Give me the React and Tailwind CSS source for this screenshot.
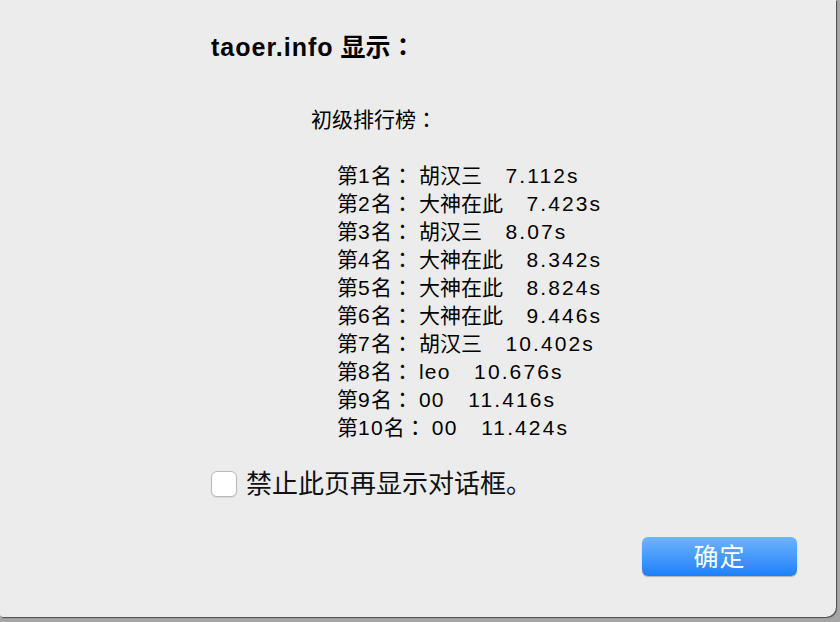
import React from "react";

const rows = [
  ["1", "胡汉三", "7.112s"],
  ["2", "大神在此", "7.423s"],
  ["3", "胡汉三", "8.07s"],
  ["4", "大神在此", "8.342s"],
  ["5", "大神在此", "8.824s"],
  ["6", "大神在此", "9.446s"],
  ["7", "胡汉三", "10.402s"],
  ["8", "leo", "10.676s"],
  ["9", "00", "11.416s"],
  ["10", "00", "11.424s"],
];

function Colon() {
  return (
    <span className="font-['Liberation_Sans','Noto_Sans_CJK_TC',sans-serif]">：</span>
  );
}

export default function App() {
  return (
    <div className="w-[840px] h-[622px] bg-[#a6a6a6] overflow-hidden font-['Liberation_Sans','Noto_Sans_CJK_SC',sans-serif] text-black">
      <div className="w-[836px] h-[617px] bg-[#ececec] rounded-br-[10px] rounded-bl-[3px] shadow-[1px_1px_1px_rgba(0,0,0,0.55)] flex flex-col">
        <div className="pl-[211px] pt-[32px] h-[62px] text-[25px] leading-[30px] font-bold whitespace-pre">
          <span className="tracking-[1px]">taoer.info</span> 显示<Colon />
        </div>
        <div className="pl-[311px] mt-[44px] text-[21px] leading-[28px] whitespace-pre">
          <div className="h-[28px]">
            初级排行榜<Colon />
          </div>
          <div className="h-[28px]" />
          {rows.map(([n, name, t]) => (
            <div key={n} className="pl-[26px] h-[28px]">
              第<span className="tracking-[1.2px]">{n}</span>名<Colon />
              <span className="ml-[6px]">
                {/^[a-z0-9]+$/.test(name) ? (
                  <span className="tracking-[1.2px]">{name}</span>
                ) : (
                  name
                )}
              </span>
              <span className="tracking-[2px]">{"  "}</span>
              <span className="tracking-[2.1px]">{" " + t}</span>
            </div>
          ))}
        </div>
        <div className="pl-[211px] mt-[27px] h-[30px] flex items-center">
          <div className="w-[26px] h-[26px] rounded-[6px] border border-[#b9b9b9] bg-white shadow-[0_1px_1px_rgba(0,0,0,0.08)]" />
          <span className="ml-[9px] text-[26px] leading-[30px] text-[#111]">
            禁止此页再显示对话框。
          </span>
        </div>
        <div className="flex justify-end pr-[39px] mt-[38px]">
          <div className="w-[155px] h-[39px] rounded-[6px] bg-linear-to-b from-[#6db4fb] to-[#1a7ffa] shadow-[0_1px_1px_rgba(0,0,0,0.25)] flex items-center justify-center text-white text-[25px] leading-[30px] tracking-[1px]">
            确定
          </div>
        </div>
      </div>
    </div>
  );
}
